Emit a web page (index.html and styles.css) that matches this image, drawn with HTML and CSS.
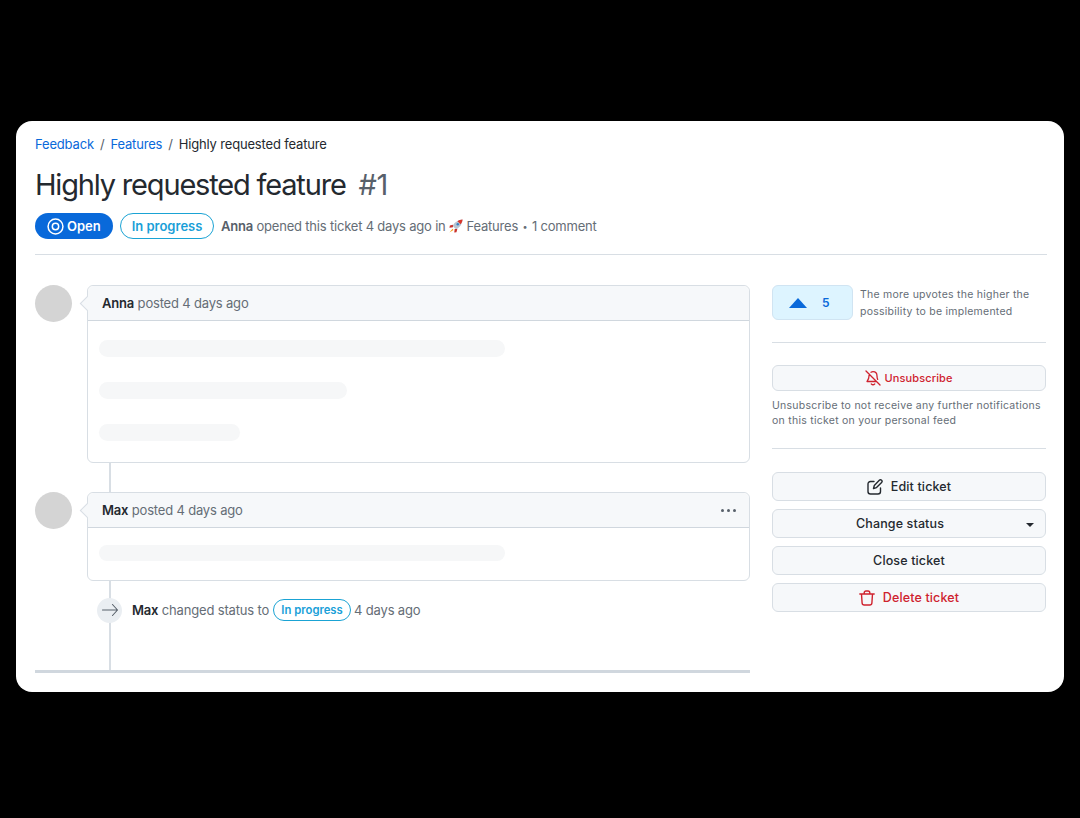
FILE: index.html
```html
<!DOCTYPE html>
<html lang="en">
<head>
<meta charset="utf-8">
<title>Highly requested feature</title>
<link rel="stylesheet" href="styles.css">
</head>
<body>
<main class="card">
  <nav class="crumbs"><a>Feedback</a><span class="sep">/</span><a>Features</a><span class="sep">/</span><span>Highly requested feature</span></nav>
  <h1 class="title">Highly requested feature <span class="num">#1</span></h1>
  <div class="meta">
    <span class="pill-open">
      <svg class="open-icon" viewBox="0 0 16 16"><circle cx="8" cy="8" r="7" fill="none" stroke="#fff" stroke-width="1.4"/><circle cx="8" cy="8" r="3" fill="none" stroke="#fff" stroke-width="1.4"/></svg>
      Open
    </span>
    <span class="pill-progress">In progress</span>
    <span class="meta-text"><b>Anna</b> opened this ticket 4 days ago in
      <svg class="rocket" viewBox="0 0 16 16"><path d="M15.500.5C10 1 6 4 4.200 8l3.800 3.800c4-1.800 7-5.800 7.500-11.300z" fill="#b9c4d0"/><path d="M15.500.5c-2.300.2-4.200.9-5.800 2l3.600 3.600c1.100-1.600 2-3.300 2.200-5.600z" fill="#d9362b"/><path d="M4.500 6.500 1 7.500.5 10l4-.5zM9.500 11.500l-1 3.500-2.500.5.500-4z" fill="#c9302a"/><path d="M4 11 .5 15.500 5 12.500z" fill="#f59e0b"/><circle cx="10" cy="6" r="1.400" fill="#3b82c4"/></svg>
      Features <span class="dot">•</span> 1 comment</span>
  </div>
  <hr class="rule rule-head">
  <div class="columns">
    <section class="timeline">
      <article class="post">
        <div class="avatar"></div>
        <div class="box">
          <header class="box-head"><span><b>Anna</b> posted 4 days ago</span></header>
          <div class="box-body">
            <div class="skeleton s-wide"></div>
            <div class="skeleton s-mid"></div>
            <div class="skeleton s-short"></div>
          </div>
        </div>
      </article>
      <article class="post post-second">
        <div class="avatar"></div>
        <div class="box">
          <header class="box-head"><span><b>Max</b> posted 4 days ago</span><span class="dots"><i></i><i></i><i></i></span></header>
          <div class="box-body box-body-single">
            <div class="skeleton s-wide"></div>
          </div>
        </div>
      </article>
      <div class="event">
        <span class="event-icon"><svg viewBox="0 0 16 16" fill="none" stroke="#57606a" stroke-width="1.100" stroke-linecap="round" stroke-linejoin="round"><path d="M.5 8h15M10.500 2.500 15.500 8l-5 5.500"/></svg></span>
        <span class="event-text"><b>Max</b> changed status to</span>
        <span class="pill-small">In progress</span>
        <span class="event-text">4 days ago</span>
      </div>
      <div class="end-bar"></div>
    </section>
    <aside class="side">
      <div class="vote">
        <button class="vote-btn"><svg class="vote-arrow" viewBox="0 0 18 10"><path d="M9 0 18 10H0z" fill="#0969da"/></svg><span>5</span></button>
        <p class="vote-note">The more upvotes the higher the possibility to be implemented</p>
      </div>
      <hr class="rule rule-a">
      <button class="btn btn-small danger">
        <svg class="ico-bell" viewBox="0 0 16 16" fill="none" stroke="#cf222e" stroke-width="1.300" stroke-linecap="round" stroke-linejoin="round"><path d="M1 1l14 14M4.300 4.200C4.100 4.700 4 5.300 4 6c0 3-1.300 4.500-2 5.500h9.500M6 2.200C6.600 1.800 7.300 1.600 8 1.600c2.400 0 4 1.900 4 4.400 0 1.400.3 2.500.7 3.400M6.300 14c.9.800 2.500.8 3.400 0"/></svg>
        Unsubscribe
      </button>
      <p class="sub-note">Unsubscribe to not receive any further notifications on this ticket on your personal feed</p>
      <hr class="rule rule-b">
      <div class="actions">
        <button class="btn"><svg class="ico" viewBox="0 0 16 16" fill="none" stroke="#24292f" stroke-width="1.400" stroke-linecap="round" stroke-linejoin="round"><path d="M7 2.500H3.500C2 2.500 1 3.500 1 5v7.500C1 14 2 15 3.500 15H11c1.500 0 2.500-1 2.500-2.500V9"/><path d="M12.300 1.200a1.500 1.500 0 0 1 2.300 2.200L9.500 8.600 6.500 9.500l.8-3z"/></svg>Edit ticket</button>
        <button class="btn btn-status">Change status<svg class="caret" viewBox="0 0 8 4"><path d="M0 0h8L4 4z" fill="#24292f"/></svg></button>
        <button class="btn">Close ticket</button>
        <button class="btn danger"><svg class="ico" viewBox="0 0 16 16" fill="none" stroke="#cf222e" stroke-width="1.400" stroke-linecap="round" stroke-linejoin="round"><path d="M.8 4h14.400M5.200 4V2.800C5.200 1.800 6 1 7 1h2c1 0 1.800.8 1.800 1.800V4M2.500 4l.6 9c.1 1.100 1 2 2.100 2h5.600c1.100 0 2-.9 2.100-2l.6-9"/></svg>Delete ticket</button>
      </div>
    </aside>
  </div>
</main>
</body>
</html>
```
FILE: styles.css
```css
* { box-sizing: border-box; }
html, body { margin: 0; height: 100%; }
body {
  background: #000;
  padding: 121px 16px 0;
  font-family: Inter, "Liberation Sans", sans-serif;
  color: #24292f;
}
.card {
  background: #fff;
  border-radius: 16px;
  height: 571px;
  padding: 14px 17px 0 19px;
  overflow: hidden;
}
.crumbs { font-size: 13px; line-height: 18px; display: flex; letter-spacing: -.17px; }
.crumbs a { color: #0969da; }
.sep { margin: 0 6px; color: #57606a; }
.title {
  font-size: 29px;
  font-weight: 400;
  line-height: 38px;
  margin: 13px 0 0;
  letter-spacing: -1.180px;
}
.num { color: #57606a; margin-left: 6px; letter-spacing: -.6px; }
.meta { display: flex; align-items: center; margin-top: 9px; height: 26px; }
.pill-open {
  display: flex; align-items: center; gap: 3px;
  width: 78px; height: 26px; padding-left: 12px;
  background: #0969da; color: #fff;
  border-radius: 13px; font-size: 13px; font-weight: 600;
}
.open-icon { width: 17px; height: 17px; }
.pill-progress {
  display: flex; align-items: center; justify-content: center;
  width: 94px; height: 26px; margin-left: 7px;
  border: 1px solid #1aa3d4; color: #1a9fd8;
  border-radius: 13px; font-size: 13px; font-weight: 600;
}
.meta-text { margin-left: 7px; font-size: 13px; color: #656d76; letter-spacing: -.2px; }
.meta-text b { font-weight: 600; color: #57606a; }
.rocket { width: 14px; height: 14px; vertical-align: -2px; }
.dot { font-size: 9px; margin: 0 1px; vertical-align: 1px; }
.rule { border: 0; border-top: 1px solid #d8dee4; margin: 0; }
.rule-head { margin-top: 15px; }
.columns { display: grid; grid-template-columns: 715px 274px; column-gap: 22px; margin-top: 30px; }
.timeline { position: relative; }
.timeline::before {
  content: ""; position: absolute; left: 74px; top: 100px; bottom: 3px;
  width: 2px; background: #d8dee4;
}
.post { position: relative; display: flex; gap: 15px; align-items: flex-start; }
.post-second { margin-top: 29px; }
.avatar { width: 37px; height: 37px; flex: none; border-radius: 50%; background: #d4d4d4; }
.box {
  position: relative; flex: 1;
  background: #fff; border: 1px solid #d8dee4; border-radius: 6px;
}
.box::before {
  content: ""; position: absolute; left: -6px; top: 12px;
  width: 10px; height: 10px; transform: rotate(45deg);
  background: #f6f8fa; border-left: 1px solid #d8dee4; border-bottom: 1px solid #d8dee4;
}
.box-head {
  position: relative;
  display: flex; align-items: center; justify-content: space-between;
  height: 35px; padding: 0 13px 0 14px;
  background: #f6f8fa; border-bottom: 1px solid #d0d7de;
  border-radius: 6px 6px 0 0;
  font-size: 13px; color: #656d76; letter-spacing: -.18px;
}
.box-head b, .event-text b { font-weight: 600; color: #24292f; }
.box-body { padding: 19px 11px 21px; display: flex; flex-direction: column; gap: 25px; }
.box-body-single { padding: 17px 11px 19px; }
.box-body-single .skeleton { height: 16px; }
.skeleton { height: 17px; border-radius: 9px; background: #f6f7f8; }
.s-wide { width: 406px; }
.s-mid { width: 248px; }
.s-short { width: 141px; }
.dots { display: flex; gap: 3px; }
.dots i { width: 3px; height: 3px; border-radius: 50%; background: #57606a; }
.event { position: relative; display: flex; align-items: center; margin: 16px 0 0 62px; height: 26px; font-size: 13px; color: #656d76; letter-spacing: -.17px; }
.event-icon {
  display: flex; align-items: center; justify-content: center;
  width: 25px; height: 25px; border-radius: 50%; background: #eaeef2;
}
.event-icon svg { width: 16px; height: 16px; }
.event-text { margin-left: 10px; }
.pill-small {
  display: flex; align-items: center; justify-content: center;
  width: 78px; height: 22px; margin-left: 4px;
  border: 1px solid #1aa3d4; color: #1a9fd8;
  border-radius: 11px; font-size: 11.300px; font-weight: 600; letter-spacing: 0;
}
.pill-small + .event-text { margin-left: 3px; }
.end-bar { position: relative; height: 3px; margin-top: 47px; background: #d0d7de; }
.vote { display: flex; gap: 7px; align-items: flex-start; }
.vote-btn {
  display: flex; align-items: center; gap: 15px;
  width: 81px; height: 35px; padding: 0 0 0 16px; flex: none;
  background: #ddf4ff; border: 1px solid #d0e4f2; border-radius: 6px;
  color: #0969da; font: 600 12px Inter, sans-serif;
}
.vote-arrow { width: 18px; height: 10px; }
.vote-note { margin: 2px 0 0; font-size: 10.500px; line-height: 16.500px; letter-spacing: .25px; color: #656d76; }
.rule-a { margin-top: 22px; }
.btn {
  display: flex; align-items: center; justify-content: center; gap: 8px;
  position: relative;
  width: 100%; height: 29px;
  background: #f6f8fa; border: 1px solid #d8dee4; border-radius: 6px;
  font: 500 12.500px Inter, sans-serif; letter-spacing: .13px; color: #24292f;
}
.btn-small { height: 26px; margin-top: 22px; font-size: 11px; gap: 3px; }
.danger { color: #cf222e; }
.ico-bell { width: 16px; height: 16px; }
.sub-note { margin: 8px 0 0; font-size: 10.500px; line-height: 14.500px; letter-spacing: .26px; color: #656d76; }
.rule-b { margin-top: 20px; }
.actions { display: flex; flex-direction: column; gap: 8px; margin-top: 23px; }
.ico { width: 16px; height: 16px; }
.btn-status { padding-right: 24px; }
.caret { position: absolute; right: 11px; top: 13px; width: 8px; height: 4px; }
```
